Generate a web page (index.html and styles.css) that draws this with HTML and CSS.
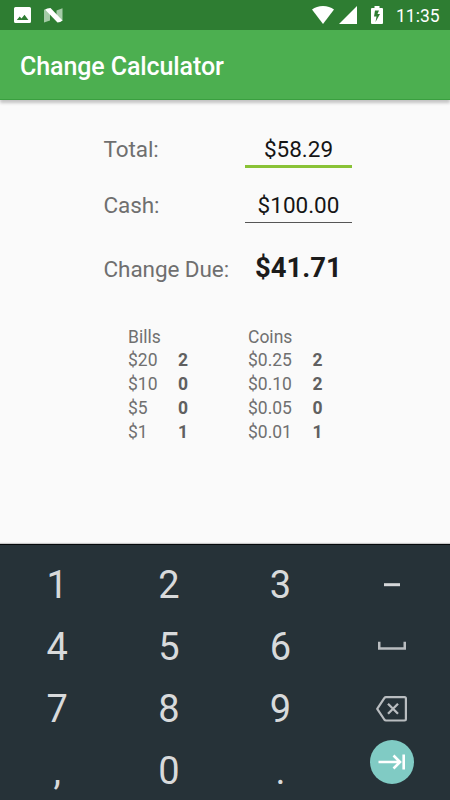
FILE: index.html
```html
<!DOCTYPE html>
<html lang="en">
<head>
<meta charset="utf-8">
<title>Change Calculator</title>
<link rel="stylesheet" href="styles.css">
</head>
<body>
<div class="screen">
  <div class="status">
    <svg class="st-picture" width="17" height="16" viewBox="0 0 17 16"><path fill="#fff" fill-rule="evenodd" d="M1.500 0h14A1.500 1.500 0 0 1 17 1.500v13a1.500 1.500 0 0 1-1.500 1.500h-14A1.500 1.500 0 0 1 0 14.500v-13A1.500 1.500 0 0 1 1.500 0zM2.800 13h11.600L10.500 7.800 7.500 11.400 5.700 9.400z"/></svg>
    <svg class="st-nougat" width="19" height="15" viewBox="0 0 19 15"><path fill="#a5cba7" d="M0 1.500 6 3v9.500L0 14.500zM12.500 2.500l6-2.300v12.500L12.500 12z"/><path fill="#fff" d="M1 1.500Q3 .2 6.500 0L18.500 12.500Q16.500 14.500 13.500 14.500z"/></svg>
    <span class="spacer"></span>
    <svg class="st-wifi" width="22" height="18" viewBox="0 0 22 18"><path fill="#fff" d="M0 3.500Q4.500 0 11 0t11 3.500L11 18z"/></svg>
    <svg class="st-cell" width="18" height="18" viewBox="0 0 18 18"><path fill="#fff" d="M18 0v18H0z"/></svg>
    <svg class="st-battery" width="12" height="18" viewBox="0 0 12 18"><path fill="#fff" fill-rule="evenodd" d="M3.500 0h5v2H11a1 1 0 0 1 1 1v14a1 1 0 0 1-1 1H1a1 1 0 0 1-1-1V3a1 1 0 0 1 1-1h2.500zM4 4.500 3 10.500h2.500L4.500 16 9 8H6.500L8 4.500z"/></svg>
    <span class="time">11:35</span>
  </div>
  <header class="appbar">Change Calculator</header>
  <main class="content">
    <div class="form">
      <span class="label">Total:</span><span class="field active">$58.29</span>
      <span class="label">Cash:</span><span class="field">$100.00</span>
      <span class="label due">Change Due:</span><span class="result">$41.71</span>
    </div>
    <div class="breakdown">
      <div class="group bills">
        <span class="heading">Bills</span>
        <span>$20</span><b>2</b>
        <span>$10</span><b>0</b>
        <span>$5</span><b>0</b>
        <span>$1</span><b>1</b>
      </div>
      <div class="group coins">
        <span class="heading">Coins</span>
        <span>$0.25</span><b>2</b>
        <span>$0.10</span><b>2</b>
        <span>$0.05</span><b>0</b>
        <span>$0.01</span><b>1</b>
      </div>
    </div>
  </main>
  <div class="keypad">
    <span>1</span><span>2</span><span>3</span>
    <span><svg width="34" height="30" viewBox="0 0 34 30"><path fill="#d5d7d9" d="M9 13.200h16v3H9z"/></svg></span>
    <span>4</span><span>5</span><span>6</span>
    <span><svg width="34" height="30" viewBox="0 0 34 30"><path fill="none" stroke="#b9bdc0" stroke-width="2.500" d="M4.250 9.800v6.750h25.500V9.800"/></svg></span>
    <span>7</span><span>8</span><span>9</span>
    <span><svg width="34" height="30" viewBox="0 0 34 30"><path fill="none" stroke="#b9bdc0" stroke-width="2.200" stroke-linejoin="round" d="M11 3.100h18.500q1.400 0 1.400 1.400v20.600q0 1.400-1.400 1.400H11q-1 0-1.700-1L2.200 14.800l7.100-10.700q.7-1 1.700-1z"/><path stroke="#b9bdc0" stroke-width="2.300" d="m13 9.800 10 10m0-10-10 10"/></svg></span>
    <span>,</span><span>0</span><span>.</span>
    <span class="next"><svg width="44" height="44" viewBox="0 0 44 44"><circle cx="22" cy="22" r="22" fill="#80cbc4"/><path fill="none" stroke="#fff" stroke-width="2.600" d="M8.500 22h20M23.500 15.500l6.500 6.500-6.500 6.500M33.700 14.500v15"/></svg></span>
  </div>
</div>
</body>
</html>
```

FILE: styles.css
```css
* { box-sizing: border-box; }
body { margin: 0; font-family: Roboto, sans-serif; }
svg { display: block; flex: none; }
.screen {
  width: 450px;
  height: 800px;
  display: flex;
  flex-direction: column;
  overflow: hidden;
  background: #fafafa;
}
.status {
  height: 30px;
  flex: none;
  display: flex;
  align-items: flex-start;
  padding: 6px 10px 0 14px;
  background: #2e7d32;
  color: #fff;
}
.st-picture { margin-top: 1px; }
.st-nougat { margin: 2px 0 0 12.500px; }
.spacer { flex: 1; }
.st-cell { margin-left: 5px; }
.st-battery { margin-left: 14px; }
.time {
  margin-left: 13px;
  width: 44px;
  font-size: 17.500px;
  line-height: 20px;
  white-space: nowrap;
}
.appbar {
  height: 70px;
  flex: none;
  padding: 2px 0 0 20px;
  background: #4caf50;
  color: #fff;
  font-size: 25px;
  font-weight: 500;
  letter-spacing: -0.1px;
  line-height: 70px;
  border-bottom: 1px solid #3a9f3f;
  box-shadow: 0 3px 3px rgba(0, 0, 0, 0.22);
}
.content { flex: 1; padding: 30px 98px 0 103.500px; }
.form {
  display: grid;
  grid-template-columns: 141.500px 107px;
  grid-template-rows: 56px 56px 60px;
  font-size: 22.500px;
  line-height: 38px;
  color: #6f6f6f;
}
.label { letter-spacing: -0.08px; }
.field {
  height: 37px;
  border-bottom: 1px solid #555;
  color: #151515;
  text-align: center;
}
.active { height: 38px; border-bottom: 3px solid #89c236; }
.due { padding-top: 8px; }
.result {
  padding: 7px 0 0 10px;
  font-size: 27.500px;
  font-weight: 700;
  color: #1b1b1b;
}
.breakdown {
  display: flex;
  padding: 23.500px 0 0 24.500px;
  font-size: 17.500px;
  line-height: 23.750px;
  color: #707070;
}
.group { display: grid; align-content: start; }
.group b { color: #606060; }
.bills { width: 120px; grid-template-columns: 50px 1fr; }
.coins { grid-template-columns: 64.500px 1fr; }
.heading { grid-column: 1 / -1; }
.keypad {
  height: 256px;
  flex: none;
  display: grid;
  grid-template-columns: repeat(4, 111.600px);
  grid-auto-rows: 62.200px;
  padding: 8.500px 0 0 1.500px;
  border-top: 1px solid #05090b;
  background: #263238;
  color: #d8dadb;
  font-size: 38px;
  line-height: 62px;
  box-shadow: 0 -1px 1px rgba(0, 0, 0, 0.2);
}
.keypad > span { display: flex; align-items: center; justify-content: center; }
.keypad .next { align-items: flex-start; padding-top: 0; }
```
